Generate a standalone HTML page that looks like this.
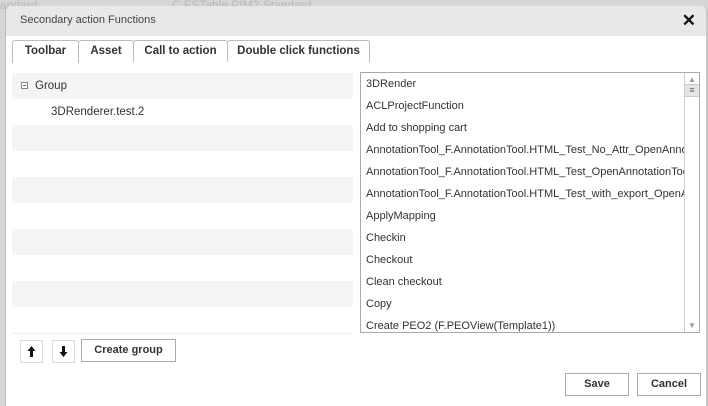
<!DOCTYPE html>
<html><head><style>
body{margin:0;width:708px;height:404px;overflow:hidden;background:#d6d6d6;font-family:"Liberation Sans",sans-serif;position:relative}
.bgt{position:absolute;top:-2px;font-size:12px;color:#b8b8b8}
.dlg{position:absolute;left:5px;top:6px;width:700px;height:400px;background:#fff;border-left:1px solid #bbb;border-right:2px solid #c8c8c8;border-radius:6px 6px 0 0;overflow:hidden}
.hd{height:30px;background:#e8e8e8;position:relative}
.hd span{position:absolute;left:14px;top:8px;font-size:11px;color:#444}
.x{position:absolute;right:10px;top:5px;font-size:17px;font-weight:bold;color:#111}
.tab{position:absolute;top:34px;height:21px;border:1px solid #bbb;border-bottom:none;border-radius:3px 3px 0 0;font-size:11.5px;font-weight:bold;color:#333;text-align:center;line-height:20px;background:#fff}
.tl{position:absolute;left:6px;top:55px;width:357px;border-top:1px solid #bbb}
.row{position:absolute;left:6px;width:341px;height:26px;font-size:11.5px;color:#333;line-height:26px}
.g{background:#f4f4f4}
.list{position:absolute;left:354px;top:66px;width:338px;height:259px;border:1px solid #aaa;overflow:hidden}
.it{height:22px;line-height:22px;padding-left:5px;font-size:11px;color:#333;white-space:nowrap;width:318px;overflow:hidden}
.sb{position:absolute;right:0;top:0;width:14px;height:259px;border-left:1px solid #ccc;background:#fff}
.btn{position:absolute;border:1px solid #aaa;background:#fff;font-size:11px;font-weight:bold;color:#333;text-align:center;line-height:21px}
</style></head><body>
<div class="bgt" style="left:0">andard</div><div class="bgt" style="left:172px">C.FSTable PIM2 Standard</div>
<div class="dlg">
<div class="hd"><span>Secondary action Functions</span><div class="x">✕</div></div>
<div class="tl"></div>
<div class="tab" style="left:6px;width:65px;height:22px;top:34px;z-index:2">Toolbar</div>
<div class="tab" style="left:72px;width:54px">Asset</div>
<div class="tab" style="left:127px;width:93px">Call to action</div>
<div class="tab" style="left:221px;width:141px">Double click functions</div>
<div class="row g" style="top:67px;padding-left:0"><svg width="7" height="7" style="margin:0 7px 0 9px;vertical-align:middle"><rect x="0.5" y="0.5" width="6" height="6" fill="#fff" stroke="#888"/><line x1="2" y1="3.5" x2="5" y2="3.5" stroke="#666"/></svg>Group</div>
<div class="row" style="top:93px;padding-left:39px;width:302px">3DRenderer.test.2</div>
<div class="row g" style="top:119px"></div>
<div class="row g" style="top:171px"></div>
<div class="row g" style="top:223px"></div>
<div class="row g" style="top:275px"></div>
<div style="position:absolute;left:6px;top:327px;width:341px;border-top:1px solid #eee"></div>
<div class="list">
<div class="it">3DRender</div><div class="it">ACLProjectFunction</div><div class="it">Add to shopping cart</div>
<div class="it">AnnotationTool_F.AnnotationTool.HTML_Test_No_Attr_OpenAnnotation</div>
<div class="it">AnnotationTool_F.AnnotationTool.HTML_Test_OpenAnnotationTool</div>
<div class="it">AnnotationTool_F.AnnotationTool.HTML_Test_with_export_OpenAnnotation</div>
<div class="it">ApplyMapping</div><div class="it">Checkin</div><div class="it">Checkout</div><div class="it">Clean checkout</div><div class="it">Copy</div><div class="it">Create PEO2 (F.PEOView(Template1))</div>
<div class="sb"><div style="font-size:8px;color:#999;text-align:center;margin-top:2px">▲</div><div style="height:11px;background:#e4e4e4;border-top:1px solid #ccc;border-bottom:1px solid #ccc;font-size:9px;text-align:center;line-height:11px;color:#666">≡</div><div style="position:absolute;bottom:2px;width:14px;font-size:8px;color:#999;text-align:center">▼</div></div>
</div>
<div class="btn" style="left:14px;top:334px;width:21px;height:21px;border-color:#ddd"><svg width="21" height="21"><path d="M10.5 5 L6.5 10 H9 V16 H12 V10 H14.5 Z" fill="#111"/></svg></div>
<div class="btn" style="left:46px;top:334px;width:21px;height:21px;border-color:#ddd"><svg width="21" height="21"><path d="M10.5 16 L6.5 11 H9 V5 H12 V11 H14.5 Z" fill="#111"/></svg></div>
<div class="btn" style="left:75px;top:333px;width:93px;height:21px">Create group</div>
<div class="btn" style="left:559px;top:367px;width:62px;height:21px">Save</div>
<div class="btn" style="left:631px;top:367px;width:62px;height:21px">Cancel</div>
</div>
</body></html>
